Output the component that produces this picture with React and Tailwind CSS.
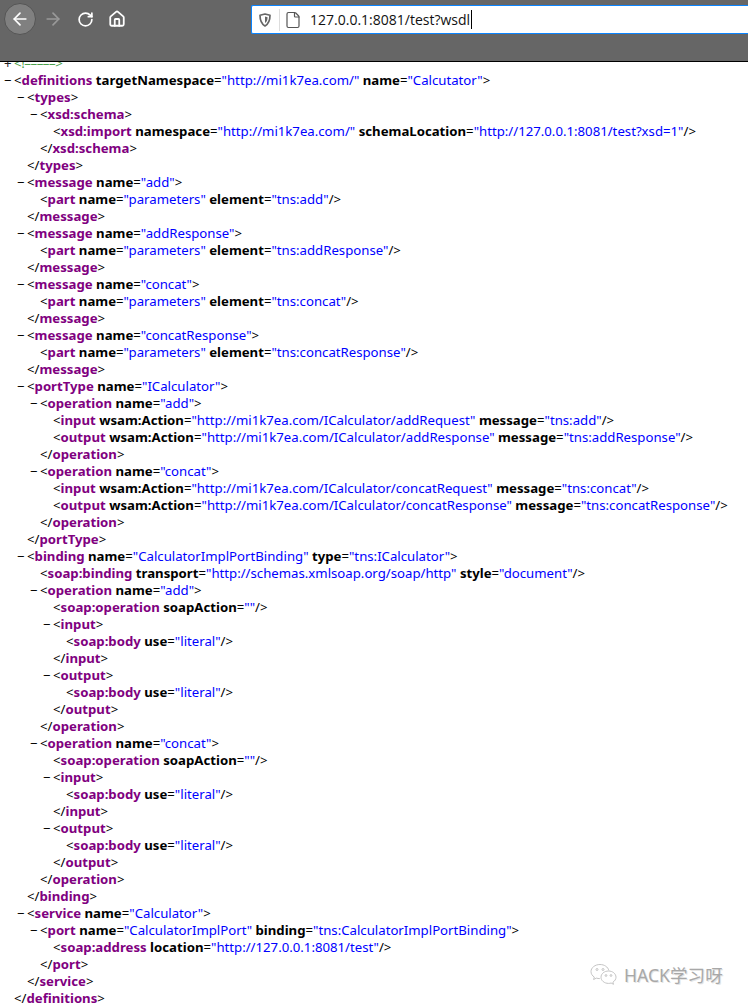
import React from "react";
import { ArrowLeft, ArrowRight, RotateCw, Home, File } from "lucide-react";

const lines = [
  [0, "-", '<definitions targetNamespace="http://mi1k7ea.com/" name="Calcutator">'],
  [1, "-", "<types>"],
  [2, "-", "<xsd:schema>"],
  [3, "", '<xsd:import namespace="http://mi1k7ea.com/" schemaLocation="http://127.0.0.1:8081/test?xsd=1"/>'],
  [2, "", "</xsd:schema>"],
  [1, "", "</types>"],
  [1, "-", '<message name="add">'],
  [2, "", '<part name="parameters" element="tns:add"/>'],
  [1, "", "</message>"],
  [1, "-", '<message name="addResponse">'],
  [2, "", '<part name="parameters" element="tns:addResponse"/>'],
  [1, "", "</message>"],
  [1, "-", '<message name="concat">'],
  [2, "", '<part name="parameters" element="tns:concat"/>'],
  [1, "", "</message>"],
  [1, "-", '<message name="concatResponse">'],
  [2, "", '<part name="parameters" element="tns:concatResponse"/>'],
  [1, "", "</message>"],
  [1, "-", '<portType name="ICalculator">'],
  [2, "-", '<operation name="add">'],
  [3, "", '<input wsam:Action="http://mi1k7ea.com/ICalculator/addRequest" message="tns:add"/>'],
  [3, "", '<output wsam:Action="http://mi1k7ea.com/ICalculator/addResponse" message="tns:addResponse"/>'],
  [2, "", "</operation>"],
  [2, "-", '<operation name="concat">'],
  [3, "", '<input wsam:Action="http://mi1k7ea.com/ICalculator/concatRequest" message="tns:concat"/>'],
  [3, "", '<output wsam:Action="http://mi1k7ea.com/ICalculator/concatResponse" message="tns:concatResponse"/>'],
  [2, "", "</operation>"],
  [1, "", "</portType>"],
  [1, "-", '<binding name="CalculatorImplPortBinding" type="tns:ICalculator">'],
  [2, "", '<soap:binding transport="http://schemas.xmlsoap.org/soap/http" style="document"/>'],
  [2, "-", '<operation name="add">'],
  [3, "", '<soap:operation soapAction=""/>'],
  [3, "-", "<input>"],
  [4, "", '<soap:body use="literal"/>'],
  [3, "", "</input>"],
  [3, "-", "<output>"],
  [4, "", '<soap:body use="literal"/>'],
  [3, "", "</output>"],
  [2, "", "</operation>"],
  [2, "-", '<operation name="concat">'],
  [3, "", '<soap:operation soapAction=""/>'],
  [3, "-", "<input>"],
  [4, "", '<soap:body use="literal"/>'],
  [3, "", "</input>"],
  [3, "-", "<output>"],
  [4, "", '<soap:body use="literal"/>'],
  [3, "", "</output>"],
  [2, "", "</operation>"],
  [1, "", "</binding>"],
  [1, "-", '<service name="Calculator">'],
  [2, "-", '<port name="CalculatorImplPort" binding="tns:CalculatorImplPortBinding">'],
  [3, "", '<soap:address location="http://127.0.0.1:8081/test"/>'],
  [2, "", "</port>"],
  [1, "", "</service>"],
  [0, "", "</definitions>"],
];

const indent = ["pl-[14px]", "pl-[27px]", "pl-[40px]", "pl-[53px]", "pl-[66px]"];
const marker = ["left-[4px]", "left-[17px]", "left-[30px]", "left-[43px]", "left-[56px]"];

function tokens(text) {
  const out = [];
  const re = /(<\/?)([\w:]+)|\s([\w:]+)(=)("[^"]*")|(\/?>)/g;
  let m;
  let k = 0;
  while ((m = re.exec(text))) {
    if (m[1]) {
      out.push(<span key={k++}>{m[1]}</span>);
      out.push(<b key={k++} className="font-bold text-[#800080]">{m[2]}</b>);
    } else if (m[3]) {
      out.push(" ");
      out.push(<b key={k++} className="font-bold text-black">{m[3]}</b>);
      out.push(<span key={k++}>{m[4]}</span>);
      out.push(<span key={k++} className="text-[#0000ff]">{m[5]}</span>);
    } else {
      out.push(<span key={k++}>{m[6]}</span>);
    }
  }
  return out;
}

function Shield() {
  return (
    <svg width="12" height="14" viewBox="0 0 12 14" fill="none" className="shrink-0">
      <path d="M6 1 L11 2.3 C11 7.5 9.5 11 6 13 C2.5 11 1 7.5 1 2.3 Z" stroke="#666" strokeWidth="1.7" strokeLinejoin="round" />
      <path d="M6 3.6 L8.6 4.3 C8.6 7 7.8 8.8 6 10 Z" fill="#666" />
    </svg>
  );
}

function WeChat() {
  return (
    <svg width="27" height="24" viewBox="0 0 27 24" fill="none" stroke="#bdbdbd" strokeWidth="0.9" className="shrink-0">
      <path d="M10 1.5C5 1.5 1 4.7 1 8.6c0 2.2 1.3 4.2 3.3 5.5L3.6 16.5l2.8-1.4c1 .3 2.2.5 3.4.5" />
      <path d="M10 1.5c4.4 0 8 2.5 8.8 5.9" />
      <circle cx="7" cy="6.5" r="1" />
      <circle cx="13" cy="6.5" r="1" />
      <path d="M18.5 8c-4.2 0-7.5 2.8-7.5 6.2s3.3 6.2 7.5 6.2c.9 0 1.8-.1 2.6-.4l2.4 1.3-.6-2.1c1.9-1.2 3.1-3 3.1-5 0-3.4-3.3-6.2-7.5-6.2z" />
      <circle cx="16" cy="12.5" r=".9" />
      <circle cx="21" cy="12.5" r=".9" />
    </svg>
  );
}

export default function App() {
  return (
    <div className="relative h-[1006px] w-[748px] overflow-hidden bg-white font-['Noto_Sans','Open_Sans',sans-serif] text-[13.2px] text-black">
      <header className="flex h-[62px] items-start border-b border-black bg-[#666666]">
        <div className="flex h-[38px] w-[251px] items-center pl-[4px]">
          <div className="flex h-[32px] w-[32px] items-center justify-center rounded-full border border-[#555] bg-[#808080]">
            <ArrowLeft size={20} color="#fff" strokeWidth={2} />
          </div>
          <ArrowRight size={20} color="#999" strokeWidth={2} className="ml-[7px]" />
          <RotateCw size={17} color="#fff" strokeWidth={2.4} className="ml-[14px]" />
          <Home size={18} color="#fff" strokeWidth={2.4} className="ml-[14px]" />
        </div>
        <div className="mt-[5px] flex h-[29px] flex-1 items-center rounded-l-[2px] border-y border-l border-[#0a84ff] bg-white pl-[7px]">
          <Shield />
          <div className="mx-[8px] h-[22px] w-px bg-[#ddd]" />
          <File size={18} color="#555" strokeWidth={1.6} className="-ml-[4px]" />
          <span className="ml-[8px] font-['Open_Sans',sans-serif] text-[14px] text-[#111]">127.0.0.1:8081/test?wsdl</span>
          <span className="ml-px h-[19px] w-px bg-black" />
        </div>
      </header>
      <main>
        <div className="relative flex h-[10px] items-end overflow-hidden pl-[14px] leading-[17px]">
          <span className="absolute bottom-0 left-[4px] text-[#222]">+</span>
          <span className="tracking-[-0.4px] text-[#4aa04a]">{"<!–––––>"}</span>
        </div>
        {lines.map(([depth, mark, text], i) => (
          <div key={i} className={"relative h-[17px] whitespace-nowrap leading-[17px] " + indent[depth]}>
            {mark ? <span className={"absolute top-0 " + marker[depth]}>−</span> : null}
            {tokens(text)}
          </div>
        ))}
      </main>
      <div className="absolute left-[590px] top-[962px] flex items-center gap-[7px] text-[#a8a8a8]">
        <WeChat />
        <span className="font-['Noto_Sans','Noto_Sans_CJK_SC',sans-serif] text-[17.6px] [text-shadow:1px_1px_0_#e5e5e5]">HACK学习呀</span>
      </div>
    </div>
  );
}
